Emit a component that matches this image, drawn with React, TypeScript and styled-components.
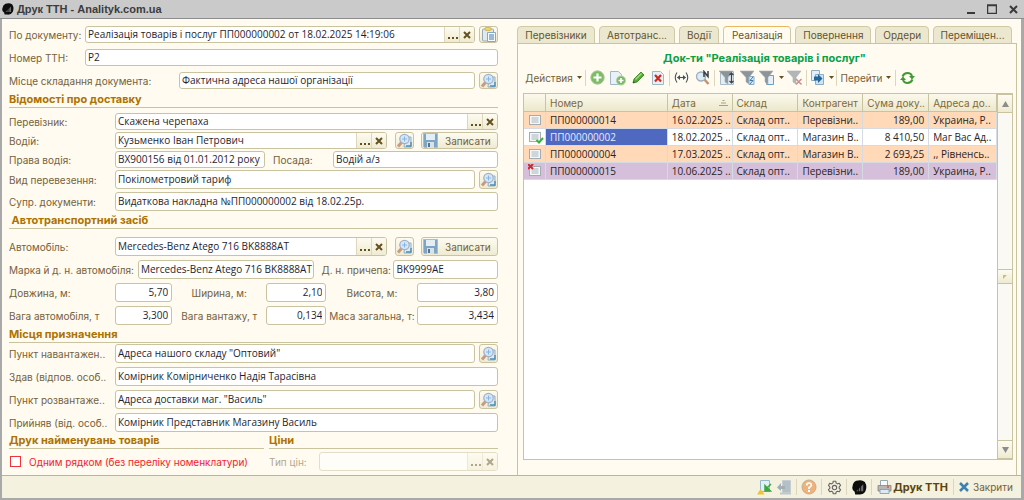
import React from 'react';
import styled, { createGlobalStyle, css } from 'styled-components';

const GlobalStyle = createGlobalStyle`
  * { box-sizing: border-box; }
  body { margin: 0; background: #cacaca; }
  button, input { font: inherit; color: inherit; margin: 0; }
  svg { display: block; flex: none; }
`;

const LABEL_FONT = 'Inter, "Liberation Sans", sans-serif';
const VALUE_FONT = '"Open Sans", "Liberation Sans", sans-serif';

const line = '#c9c3a0';
const labelColor = '#75613c';

const Window = styled.div`
  display: flex;
  flex-direction: column;
  min-height: 100vh;
  border: solid #a9a9a9;
  border-width: 0 3px 2px 2px;
  background: #fffbf0;
  color: ${labelColor};
  font: 10px/14px ${LABEL_FONT};
`;

const TitleBar = styled.header`
  display: flex;
  align-items: center;
  gap: 3px;
  height: 19px;
  padding: 0 2px;
  margin: 0 -3px 0 -2px;
  background: #cacaca;
  border-bottom: 1px solid #8d8d8d;
  color: #3c3c3c;
`;

const Title = styled.h1`
  flex: 1;
  margin: 0;
  font: bold 11px/18px "Liberation Sans", sans-serif;
`;

const WindowButton = styled.button`
  display: grid;
  place-items: center;
  width: 18px;
  height: 18px;
  padding: 0;
  border: 0;
  background: none;
`;

const Body = styled.main`
  flex: 1;
  display: flex;
  gap: 19px;
  padding: 7px 4px 0 7px;
`;

const Form = styled.form`
  flex: 489 1 0;
  min-width: 0;
`;

const Group = styled.div<{ $gap: number; $below?: number }>`
  display: flex;
  flex-direction: column;
  gap: ${p => p.$gap}px;
  margin-bottom: ${p => p.$below ?? 0}px;
`;

const Row = styled.div<{ $compact?: boolean }>`
  display: flex;
  align-items: center;
  height: ${p => (p.$compact ? 17 : 19)}px;
`;

const Heading = styled.h2<{ $above: number; $below: number }>`
  height: 16px;
  margin: ${p => p.$above}px 0 ${p => p.$below}px;
  border-bottom: 1px solid ${line};
  color: #ad7200;
  font: bold 11px/15px ${LABEL_FONT};
`;

const Label = styled.label<{ $w: number; $center?: boolean; $indent?: number }>`
  flex: none;
  width: ${p => p.$w}px;
  padding-left: ${p => p.$indent ?? 0}px;
  text-align: ${p => (p.$center ? 'center' : 'left')};
  white-space: nowrap;
  overflow: hidden;
`;

const MutedLabel = styled(Label)`
  color: #b5a78b;
`;

const FieldBox = styled.div<{ $grow?: number; $disabled?: boolean }>`
  flex: ${p => p.$grow ?? 1} 1 0;
  min-width: 0;
  align-self: stretch;
  display: flex;
  border: 1px solid ${line};
  border-radius: 3px;
  background: #fff;
  overflow: hidden;
  opacity: ${p => (p.$disabled ? 0.5 : 1)};
`;

const Input = styled.input<{ $right?: boolean }>`
  flex: 1;
  min-width: 0;
  padding: ${p => (p.$right ? '0 3px 1px 0' : '0 0 1px 2px')};
  border: 0;
  outline: 0;
  background: none;
  color: #1e1e30;
  font-family: ${VALUE_FONT};
  text-align: ${p => (p.$right ? 'right' : 'left')};
`;

const face = css`
  background: linear-gradient(#fdfbf0, #efebd2);
`;

const PickButton = styled.button`
  ${face}
  display: grid;
  place-items: center;
  width: 15px;
  padding: 0;
  border: 0;
  border-left: 1px solid #ddd8bb;
`;

const IconButton = styled.button<{ $gap?: number }>`
  ${face}
  display: grid;
  place-items: center;
  align-self: stretch;
  flex: none;
  width: 19px;
  margin-left: ${p => p.$gap ?? 4}px;
  padding: 0;
  border: 1px solid ${line};
  border-radius: 3px;
`;

const SaveButton = styled.button`
  ${face}
  display: flex;
  align-items: center;
  align-self: stretch;
  gap: 7px;
  flex: none;
  width: 77px;
  margin-left: 7px;
  padding: 0 0 0 1px;
  border: 1px solid ${line};
  border-radius: 3px;
`;

const Split = styled.div`
  display: flex;
  gap: 5px;
`;

const SplitPart = styled.div<{ $grow: number }>`
  flex: ${p => p.$grow} 1 0;
  min-width: 0;
`;

const CheckBox = styled.input`
  appearance: none;
  flex: none;
  width: 11px;
  height: 11px;
  margin: 0 8px 0 1px;
  border: 1px solid #f0323c;
  background: #fff;
`;

const RedLabel = styled.label`
  color: #f5222d;
  white-space: nowrap;
`;

const Side = styled.section`
  flex: 500 1 0;
  min-width: 0;
  display: flex;
  flex-direction: column;
`;

const Tabs = styled.div`
  display: flex;
  gap: 4px;
  padding-right: 5px;
`;

const Tab = styled.button<{ $w: number; $active?: boolean }>`
  flex: ${p => p.$w} 1 0;
  min-width: 0;
  height: 18px;
  margin-bottom: -1px;
  padding: 0;
  border: 1px solid #cfc9a8;
  border-radius: 4px 4px 0 0;
  background: #ece8cf;
  color: #65532f;
  line-height: 16px;
  white-space: nowrap;
  ${p =>
    p.$active &&
    css`
      border-top-color: #e8b860;
      border-bottom-color: #fffbf0;
      background: #fffbf0;
    `}
`;

const Panel = styled.div`
  flex: 1;
  display: flex;
  flex-direction: column;
  padding: 7px 3px 15px 5px;
  border: solid ${line};
  border-width: 1px 1px 0;
`;

const Caption = styled.h2`
  margin: 0 0 2px;
  padding-right: 7px;
  color: #0a9f48;
  font: bold 11px/15px ${LABEL_FONT};
  text-align: center;
`;

const Toolbar = styled.div`
  display: flex;
  align-items: center;
  height: 19px;
  margin-bottom: 6px;
`;

const ToolButton = styled.button<{ $w?: number }>`
  display: flex;
  align-items: center;
  justify-content: center;
  gap: 4px;
  flex: none;
  width: ${p => (p.$w ? p.$w + 'px' : 'auto')};
  padding: 0 3px;
  border: 0;
  background: none;
  white-space: nowrap;
`;

const PrintButton = styled(ToolButton)`
  gap: 1px;
`;

const Separator = styled.span<{ $wide?: boolean }>`
  flex: none;
  width: 1px;
  height: 16px;
  margin: 0 ${p => (p.$wide ? 2 : 1)}px;
  background: #dcd7bc;
`;

const GridFrame = styled.div`
  flex: 1;
  display: flex;
  align-items: stretch;
  border: 1px solid ${line};
  background: #fff;
`;

const TableArea = styled.div`
  flex: 1;
  min-width: 0;
`;

const Table = styled.table`
  width: 100%;
  table-layout: fixed;
  border-collapse: separate;
  border-spacing: 0;
  color: #2b2320;
`;

const Col = styled.col<{ $share: number }>`
  width: ${p => p.$share}%;
`;

const Th = styled.th`
  height: 18px;
  padding: 0 4px;
  border-right: 1px solid ${line};
  border-bottom: 1px solid ${line};
  background: linear-gradient(#fbf9ec, #ece8cd);
  color: #80693a;
  font-weight: normal;
  text-align: left;
  white-space: nowrap;
  overflow: hidden;
`;

const SortHead = styled.span`
  display: flex;
  align-items: center;
  justify-content: space-between;
`;

const tones = { peach: '#ffd9b8', white: '#ffffff', violet: '#d6bfda' };

const Tr = styled.tr<{ $tone: keyof typeof tones }>`
  background: ${p => tones[p.$tone]};
`;

const Td = styled.td<{ $right?: boolean; $selected?: boolean }>`
  height: 17px;
  padding: 0 4px;
  border-right: 1px solid #d5dbe0;
  border-bottom: 1px solid #d5dbe0;
  background: ${p => (p.$selected ? '#4f68c0' : 'transparent')};
  color: ${p => (p.$selected ? '#e6ebff' : 'inherit')};
  font-family: ${VALUE_FONT};
  text-align: ${p => (p.$right ? 'right' : 'left')};
  white-space: nowrap;
  overflow: hidden;
`;

const ScrollBar = styled.div`
  flex: none;
  display: flex;
  flex-direction: column;
  justify-content: space-between;
  width: 15px;
  border-left: 1px solid ${line};
  background: #fbf9f3;
`;

const ScrollButton = styled.button<{ $h: number }>`
  ${face}
  display: grid;
  place-items: center;
  width: 100%;
  height: ${p => p.$h}px;
  padding: 0;
  border: solid ${line};
  border-width: 1px 0;
`;

const Footer = styled.footer`
  display: flex;
  align-items: center;
  justify-content: flex-end;
  height: 23px;
  padding-right: 5px;
  border-top: 1px solid #bdb58f;
  background: #f4f1de;
`;

const Strong = styled.b`
  color: #5d4408;
  font-size: 11px;
`;

const Cross = () => (
  <svg width="8" height="8" viewBox="0 0 8 8" stroke="#63511f" strokeWidth="2">
    <path d="M1 1L7 7M7 1L1 7" />
  </svg>
);

const Dots = () => (
  <svg width="11" height="11" viewBox="0 0 11 11" fill="#63511f">
    <path d="M1 8h2v2H1zM5 8h2v2H5zM9 8h2v2H9z" />
  </svg>
);

const Caret = () => (
  <svg width="5" height="3" viewBox="0 0 5 3" fill="#63511f">
    <path d="M0 0h5L2.5 3z" />
  </svg>
);

const Lens = () => (
  <svg width="17" height="15" viewBox="0 0 17 15">
    <path d="M9 4h6v10H8z" fill="#dceaf3" stroke="#8fb0c4" />
    <path d="M10 13h5V9" stroke="#4f8db3" strokeWidth="1.400" fill="none" />
    <path d="M2 13.5L5.500 9.500" stroke="#c99a80" strokeWidth="3" />
    <circle cx="8.500" cy="6" r="4.700" fill="#d4e8fb" stroke="#a5b1c2" strokeWidth="1.300" />
    <path d="M6 6h5M8.500 3.500v5" stroke="#86b4e4" />
  </svg>
);

const Clipboard = () => (
  <svg width="16" height="15" viewBox="0 0 16 15">
    <rect x="1.500" y="2" width="11" height="12" rx="1" fill="#dfeaf0" stroke="#9aa9b0" />
    <rect x="4" y=".5" width="6" height="3" rx="1" fill="#f2d668" stroke="#c9a83c" strokeWidth=".7" />
    <path d="M6.500 5.500h8v9h-8z" fill="#f7fbff" stroke="#88a8c2" />
    <path d="M8 8h5M8 10h5M8 12h5" stroke="#3f78ae" />
  </svg>
);

const Floppy = () => (
  <svg width="15" height="15" viewBox="0 0 15 15">
    <path d="M.5.5h14v14h-13l-1-1z" fill="#7ea6c4" stroke="#a3bfd2" />
    <path d="M3 1h9v6H3z" fill="#e4eef5" />
    <path d="M4 9h7v6H4z" fill="#d9e2e8" />
    <path d="M5 10h2v4H5z" fill="#4f7694" />
  </svg>
);

const Logo = ({ size = 12 }: { size?: number }) => (
  <svg width={size} height={size} viewBox="0 0 14 14">
    <path d="M4 .8Q9-.8 12 1.800Q14.500 6 12.500 10.500Q10.500 14 6 13.500H3L2.500 11Q-.5 9 .5 6Q1 2 4 .8z" fill="#0d0d0d" />
    <path d="M4 10.500L10.500 4v6.500z" fill="#6c6c6c" />
    <path d="M6 7v4M8 5v6" stroke="#0d0d0d" strokeWidth=".8" />
  </svg>
);

const Plus = () => (
  <svg width="15" height="15" viewBox="0 0 15 15">
    <circle cx="7.500" cy="7.500" r="6.700" fill="#7dbb66" stroke="#a8c99a" />
    <path d="M7.500 3.500v8M3.500 7.500h8" stroke="#fff" strokeWidth="2.200" />
  </svg>
);

const PageIcon = ({ children, x = 1 }: { children?: React.ReactNode; x?: number }) => (
  <svg width="16" height="16" viewBox="0 0 16 16">
    <path d={`M${x + 0.5} 1.500h8l3 3v10h-11z`} fill="#e8f1f7" stroke="#9fb8c6" />
    {children}
  </svg>
);

const AddCopy = () => (
  <PageIcon x={0}>
    <circle cx="11" cy="10.500" r="4.500" fill="#78b862" stroke="#b4d3a7" />
    <path d="M11 8v5M8.500 10.500h5" stroke="#fff" strokeWidth="1.600" />
  </PageIcon>
);

const Delete = () => (
  <PageIcon x={2}>
    <path d="M5 5L11 11.500M11 5L5 11.500" stroke="#cf2a1f" strokeWidth="2.200" />
  </PageIcon>
);

const Pencil = () => (
  <svg width="13" height="13" viewBox="0 0 13 13">
    <path d="M1 12l1-4 7-7 3 3-7 7z" fill="#4fae2d" stroke="#2f7d1a" strokeWidth=".8" />
    <path d="M3.500 8.500l6-6" stroke="#a5df85" strokeWidth="1.200" />
    <path d="M1 12l.5-2L3 11.500z" fill="#2d4a1e" />
  </svg>
);

const Interval = () => (
  <svg width="15" height="11" viewBox="0 0 15 11" fill="none" stroke="#46535e" strokeWidth="1.100">
    <path d="M3 .5Q-.5 5.500 3 10.500M12 .5Q15.500 5.500 12 10.500" />
    <path d="M3.500 5.500h8" />
    <path d="M3 5.500l3-2.500v5zM12 5.500L9 3v5z" fill="#46535e" stroke="none" />
  </svg>
);

const FindNumber = () => (
  <svg width="16" height="16" viewBox="0 0 16 16">
    <path d="M9 9l4.500 5" stroke="#c8906f" strokeWidth="2.500" />
    <circle cx="6" cy="6.500" r="4.500" fill="#dcebf5" stroke="#9db0bf" strokeWidth="1.300" />
    <path d="M9 7V1.500l4 5V1" fill="none" stroke="#3a3f45" strokeWidth="1.500" />
  </svg>
);

const Funnel = ({ kind }: { kind: 'sort' | 'page' | 'list' | 'clear' }) => (
  <svg width="16" height="16" viewBox="0 0 16 16">
    {kind === 'list' && <path d="M7.500 5.500h7v9h-7z" fill="#e6f0f8" stroke="#6f9cc0" />}
    {kind === 'sort' && <path d="M1.500 1.500h13v13h-13z" fill="#e2edf4" stroke="#a9bcc8" />}
    <path d="M0 1h14L9 7.500V14l-3-2V7.500z" fill={kind === 'clear' ? '#b3b6b8' : '#8b949b'} stroke="#aab1b6" strokeWidth=".6" />
    {kind === 'sort' && <path d="M12.500 3v10M10.500 5l2-2 2 2M10.500 11l2 2 2-2" fill="none" stroke="#39424a" strokeWidth="1.200" />}
    {kind === 'page' && (
      <>
        <path d="M9 6.500h5v8H9z" fill="#d9eaf6" stroke="#87aecb" />
        <path d="M13 7l-3 3.500h3L10 14" fill="none" stroke="#3c78a8" />
      </>
    )}
    {kind === 'clear' && <path d="M9 9l5.500 5.500M14.500 9L9 14.500" stroke="#c98f8a" strokeWidth="1.500" />}
  </svg>
);

const CopyTo = () => (
  <svg width="15" height="15" viewBox="0 0 15 15">
    <path d="M1.500.5h8v10h-8z" fill="#e3eef6" stroke="#8dabc1" />
    <path d="M5.500 4.500h8v10h-8z" fill="#d2e3ef" stroke="#8dabc1" />
    <path d="M4 6.500h4V4l4.500 4.500L8 13v-2.500H4z" fill="#23679f" />
  </svg>
);

const Refresh = () => (
  <svg width="15" height="14" viewBox="0 0 15 14" fill="none" stroke="#3f9a35" strokeWidth="2">
    <path d="M2.500 5.500Q4 2 7.500 2T12 5M12.500 8.500Q11 12 7.500 12T3 9" />
    <path d="M9 5h6l-3 3.500zM6 9H0l3-3.500z" fill="#3f9a35" stroke="none" />
  </svg>
);

const SortMark = () => (
  <svg width="9" height="6" viewBox="0 0 9 6" stroke="#aba277">
    <path d="M3.500.5h2M2 3h5M0 5.500h9" />
  </svg>
);

const Triangle = ({ down }: { down?: boolean }) => (
  <svg width="7" height="6" viewBox="0 0 7 6" fill="#8c8c8c">
    <path d={down ? 'M0 0h7L3.500 6z' : 'M0 6h7L3.500 0z'} />
  </svg>
);

const DocIcon = ({ mark }: { mark?: 'posted' | 'deleted' }) => (
  <svg width="16" height="14" viewBox="0 0 16 14">
    <rect x="1.500" y="2.500" width="11" height="9" fill="#f4f7f8" stroke="#a3adb1" />
    <path d="M3.500 5h7M3.500 7h7M3.500 9h7" stroke="#a9b4ba" />
    {mark === 'posted' && <path d="M8.500 10l2.500 2.500 4-4.500" fill="none" stroke="#35b13c" strokeWidth="2" />}
    {mark === 'deleted' && <path d="M0 0l5 5M5 0L0 5" stroke="#d9252b" strokeWidth="2" />}
  </svg>
);

const GoTo = () => (
  <svg width="15" height="15" viewBox="0 0 15 15">
    <path d="M3.500.5h9v11h-9z" fill="#e3eff6" stroke="#98b9ca" />
    <path d="M0 14.500L3.500 9l4 5.500z" fill="#eec33a" />
    <path d="M14 4L9 9M8 5.500V11h5.500z" fill="#3fa544" stroke="#3fa544" strokeWidth="1.500" />
  </svg>
);

const Exit = () => (
  <svg width="15" height="15" viewBox="0 0 15 15">
    <path d="M5.500.5h8v12h-8z" fill="#b5bfc6" stroke="#c6cdd2" />
    <path d="M8 6H4V3L0 7.500 4 11V9h4z" fill="#a3afb7" />
    <path d="M3 13.500h11" stroke="#c0c8cc" strokeWidth="2" />
  </svg>
);

const Help = () => (
  <svg width="16" height="16" viewBox="0 0 16 16">
    <circle cx="8" cy="8" r="7" fill="#efb27c" stroke="#c9ab8c" />
    <path d="M5.700 6.500Q5.700 4 8 4T10.300 6.200Q10.300 7.500 8 8.500V10" fill="none" stroke="#fff" strokeWidth="1.700" />
    <path d="M7 11h2v2H7z" fill="#fff" />
  </svg>
);

const Gear = () => (
  <svg width="15" height="15" viewBox="0 0 24 24" fill="none" stroke="#666" strokeWidth="1.800" strokeLinejoin="round">
    <path d="M10 2h4l.7 3 2 1.200 3-.9 2 3.400L19.500 11v2.300l2.200 2.100-2 3.400-3-.9-2 1.200L14 22h-4l-.7-2.900-2-1.200-3 .9-2-3.400L4.500 13.300V11L2.300 8.700l2-3.400 3 .9 2-1.200z" />
    <circle cx="12" cy="12" r="3.500" />
  </svg>
);

const Printer = () => (
  <svg width="15" height="14" viewBox="0 0 15 14">
    <path d="M3.500.5h7v6h-7z" fill="#f6fafd" stroke="#9aa6ae" />
    <path d="M1 5.500h13v5.500H1z" fill="#b9b5b5" stroke="#878383" strokeWidth=".8" />
    <path d="M3 9.500h9v4H3z" fill="#dbe9f5" stroke="#7f98ac" strokeWidth=".8" />
    <path d="M10 7h2" stroke="#e4553a" strokeWidth="1.500" />
  </svg>
);

const BlueCross = () => (
  <svg width="10" height="10" viewBox="0 0 10 10" stroke="#3d80b3" strokeWidth="2.500">
    <path d="M1 1L9 9M9 1L1 9" />
  </svg>
);

interface FieldProps {
  id: string;
  value: string;
  grow?: number;
  pick?: boolean;
  right?: boolean;
  disabled?: boolean;
}

const Field = ({ id, value, grow, pick, right, disabled }: FieldProps) => (
  <FieldBox $grow={grow} $disabled={disabled}>
    <Input id={id} defaultValue={value} $right={right} disabled={disabled} />
    {pick && (
      <>
        <PickButton type="button" aria-label="Вибрати" disabled={disabled}><Dots /></PickButton>
        <PickButton type="button" aria-label="Очистити" disabled={disabled}><Cross /></PickButton>
      </>
    )}
  </FieldBox>
);

const Search = ({ gap }: { gap?: number }) => (
  <IconButton type="button" aria-label="Відкрити" $gap={gap}><Lens /></IconButton>
);

const Save = () => (
  <SaveButton type="button"><Floppy />Записати</SaveButton>
);

const tabs: [string, number][] = [
  ['Перевізники', 78], ['Автотранс...', 76], ['Водії', 39], ['Реалізація', 68],
  ['Повернення', 76], ['Ордери', 53], ['Переміщен...', 79],
];

const columns: [string, number][] = [
  ['', 22], ['Номер', 122], ['Дата', 65], ['Склад', 66], ['Контрагент', 65], ['Сума доку..', 66], ['Адреса до..', 68],
];
const columnTotal = columns.reduce((sum, [, w]) => sum + w, 0);

const docs: { tone: keyof typeof tones; mark?: 'posted' | 'deleted'; cells: string[] }[] = [
  { tone: 'peach', cells: ['ПП000000014', '16.02.2025 ..', 'Склад опт..', 'Перевізни..', '189,00', 'Украина, Р..'] },
  { tone: 'white', mark: 'posted', cells: ['ПП000000002', '18.02.2025 ..', 'Склад опт..', 'Магазин В..', '8 410,50', 'Маг Вас Ад..'] },
  { tone: 'peach', cells: ['ПП000000004', '17.03.2025 ..', 'Склад опт..', 'Магазин В..', '2 693,25', ',, Рівненсь..'] },
  { tone: 'violet', mark: 'deleted', cells: ['ПП000000015', '10.06.2025 ..', 'Склад опт..', 'Перевізни..', '189,00', 'Украина, Р..'] },
];

export default function App() {
  return (
    <Window>
      <GlobalStyle />
      <TitleBar>
        <Logo />
        <Title>Друк ТТН - Analityk.com.ua</Title>
        <WindowButton aria-label="Згорнути">
          <svg width="8" height="10" stroke="#3a3a3a" strokeWidth="2"><path d="M0 9h8" /></svg>
        </WindowButton>
        <WindowButton aria-label="Розгорнути">
          <svg width="10" height="10" fill="none" stroke="#3a3a3a"><path d="M.5 1.500h9v8h-9zM0 1h10" strokeWidth="1.500" /></svg>
        </WindowButton>
        <WindowButton aria-label="Закрити вікно">
          <svg width="9" height="9" stroke="#3a3a3a" strokeWidth="2"><path d="M1 1l7 7M8 1L1 8" /></svg>
        </WindowButton>
      </TitleBar>

      <Body>
        <Form>
          <Group $gap={6}>
            <Row $compact>
              <Label $w={76} htmlFor="doc">По документу:</Label>
              <Field id="doc" value="Реалізація товарів і послуг ПП000000002 от 18.02.2025 14:19:06" pick />
              <IconButton type="button" aria-label="Вставити"><Clipboard /></IconButton>
            </Row>
            <Row $compact>
              <Label $w={76} htmlFor="num">Номер ТТН:</Label>
              <Field id="num" value="Р2" />
            </Row>
            <Row $compact>
              <Label $w={170} htmlFor="place">Місце складання документа:</Label>
              <Field id="place" value="Фактична адреса нашої організації" />
              <Search />
            </Row>
          </Group>

          <Heading $above={3} $below={5}>Відомості про доставку</Heading>
          <Group $gap={2} $below={2}>
            <Row $compact>
              <Label $w={106} htmlFor="carrier">Перевізник:</Label>
              <Field id="carrier" value="Скажена черепаха" pick />
            </Row>
            <Row $compact>
              <Label $w={106} htmlFor="driver">Водій:</Label>
              <Field id="driver" value="Кузьменко Іван Петрович" pick />
              <Search gap={8} />
              <Save />
            </Row>
            <Row $compact>
              <Label $w={106} htmlFor="licence">Права водія:</Label>
              <Field id="licence" value="ВХ900156 від 01.01.2012 року" grow={150} />
              <Label $w={68} $indent={8} htmlFor="post">Посада:</Label>
              <Field id="post" value="Водій а/з" grow={165} />
            </Row>
          </Group>
          <Group $gap={3}>
            <Row>
              <Label $w={106} htmlFor="kind">Вид перевезення:</Label>
              <Field id="kind" value="Покілометровий тариф" />
              <Search />
            </Row>
            <Row>
              <Label $w={106} htmlFor="papers">Супр. документи:</Label>
              <Field id="papers" value="Видаткова накладна №ПП000000002 від 18.02.25р." />
            </Row>
          </Group>

          <Heading $above={2} $below={8}>&nbsp;Автотранспортний засіб</Heading>
          <Group $gap={4}>
            <Row>
              <Label $w={106} htmlFor="car">Автомобіль:</Label>
              <Field id="car" value="Mercedes-Benz Atego 716 BK8888AT" pick />
              <Search gap={8} />
              <Save />
            </Row>
            <Row>
              <Label $w={129} htmlFor="brand">Марка й д. н. автомобіля:</Label>
              <Field id="brand" value="Mercedes-Benz Atego 716 BK8888AT" grow={177} />
              <Label $w={79} $indent={7} htmlFor="trailer">Д. н. причепа:</Label>
              <Field id="trailer" value="BK9999AE" grow={104} />
            </Row>
            <Row>
              <Label $w={106} htmlFor="length">Довжина, м:</Label>
              <Field id="length" value="5,70" grow={57} right />
              <Label $w={94} $center htmlFor="width">Ширина, м:</Label>
              <Field id="width" value="2,10" grow={60} right />
              <Label $w={91} $center htmlFor="height">Висота, м:</Label>
              <Field id="height" value="3,80" grow={81} right />
            </Row>
            <Row>
              <Label $w={106} htmlFor="carWeight">Вага автомобіля, т</Label>
              <Field id="carWeight" value="3,300" grow={57} right />
              <Label $w={94} $center htmlFor="cargo">Вага вантажу, т</Label>
              <Field id="cargo" value="0,134" grow={60} right />
              <Label $w={91} $center htmlFor="total">Маса загальна, т:</Label>
              <Field id="total" value="3,434" grow={81} right />
            </Row>
          </Group>

          <Heading $above={2} $below={1}>Місця призначення</Heading>
          <Group $gap={4}>
            <Row>
              <Label $w={106} htmlFor="loadAt">Пункт навантажен..</Label>
              <Field id="loadAt" value={'Адреса нашого складу "Оптовий"'} />
              <Search />
            </Row>
            <Row>
              <Label $w={106} htmlFor="sender">Здав (відпов. особ..</Label>
              <Field id="sender" value="Комірник Комірниченко Надія Тарасівна" />
            </Row>
            <Row>
              <Label $w={106} htmlFor="unloadAt">Пункт розвантаже..</Label>
              <Field id="unloadAt" value={'Адреса доставки маг. "Василь"'} />
              <Search />
            </Row>
            <Row>
              <Label $w={106} htmlFor="receiver">Прийняв (від. особ..</Label>
              <Field id="receiver" value="Комірник Представник Магазину Василь" />
            </Row>
          </Group>

          <Split>
            <SplitPart $grow={255}>
              <Heading $above={1} $below={3}>Друк найменувань товарів</Heading>
              <Row>
                <CheckBox type="checkbox" id="oneLine" />
                <RedLabel htmlFor="oneLine">Одним рядком (без переліку номенклатури)</RedLabel>
              </Row>
            </SplitPart>
            <SplitPart $grow={229}>
              <Heading $above={1} $below={3}>Ціни</Heading>
              <Row>
                <MutedLabel $w={50} htmlFor="price">Тип цін:</MutedLabel>
                <Field id="price" value="" pick disabled />
              </Row>
            </SplitPart>
          </Split>
        </Form>

        <Side>
          <Tabs role="tablist">
            {tabs.map(([name, w]) => (
              <Tab key={name} role="tab" $w={w} $active={name === 'Реалізація'} aria-selected={name === 'Реалізація'}>{name}</Tab>
            ))}
          </Tabs>
          <Panel>
            <Caption>Док-ти "Реалізація товарів і послуг"</Caption>
            <Toolbar>
              <ToolButton $w={61}>Действия<Caret /></ToolButton>
              <Separator />
              <ToolButton $w={21} aria-label="Додати"><Plus /></ToolButton>
              <ToolButton $w={20} aria-label="Копіювати"><AddCopy /></ToolButton>
              <ToolButton $w={20} aria-label="Змінити"><Pencil /></ToolButton>
              <ToolButton $w={20} aria-label="Видалити"><Delete /></ToolButton>
              <Separator />
              <ToolButton $w={21} aria-label="Інтервал"><Interval /></ToolButton>
              <ToolButton $w={21} aria-label="Пошук за номером"><FindNumber /></ToolButton>
              <Separator />
              <ToolButton $w={21} aria-label="Відбір і сортування"><Funnel kind="sort" /></ToolButton>
              <ToolButton $w={21} aria-label="Відбір за значенням"><Funnel kind="page" /></ToolButton>
              <ToolButton $w={27} aria-label="Історія відборів"><Funnel kind="list" /><Caret /></ToolButton>
              <ToolButton $w={20} aria-label="Вимкнути відбір"><Funnel kind="clear" /></ToolButton>
              <Separator />
              <ToolButton $w={27} aria-label="Ввести на підставі"><CopyTo /><Caret /></ToolButton>
              <Separator />
              <ToolButton $w={56}>Перейти<Caret /></ToolButton>
              <Separator />
              <ToolButton $w={21} aria-label="Оновити"><Refresh /></ToolButton>
            </Toolbar>
            <GridFrame>
              <TableArea>
                <Table>
                  <colgroup>
                    {columns.map(([name, w]) => <Col key={name} $share={(w / columnTotal) * 100} />)}
                  </colgroup>
                  <thead>
                    <tr>
                      {columns.map(([name]) => (
                        <Th key={name}>{name === 'Дата' ? <SortHead>Дата<SortMark /></SortHead> : name}</Th>
                      ))}
                    </tr>
                  </thead>
                  <tbody>
                    {docs.map(({ tone, mark, cells }) => (
                      <Tr key={cells[0]} $tone={tone}>
                        <Td><DocIcon mark={mark} /></Td>
                        {cells.map((cell, i) => (
                          <Td key={i} $right={i === 4} $selected={i === 0 && mark === 'posted'}>{cell}</Td>
                        ))}
                      </Tr>
                    ))}
                  </tbody>
                </Table>
              </TableArea>
              <ScrollBar>
                <ScrollButton $h={19} aria-label="Вгору"><Triangle /></ScrollButton>
                <ScrollButton $h={15} aria-label="Повзунок"><svg width="4" height="4" fill="#c2bb94"><path d="M0 0h4L0 4z" /></svg></ScrollButton>
                <ScrollButton $h={19} aria-label="Вниз"><Triangle down /></ScrollButton>
              </ScrollBar>
            </GridFrame>
          </Panel>
        </Side>
      </Body>

      <Footer>
        <ToolButton $w={20} aria-label="Перейти до документа"><GoTo /></ToolButton>
        <ToolButton $w={20} aria-label="Вихід"><Exit /></ToolButton>
        <Separator $wide />
        <ToolButton $w={20} aria-label="Довідка"><Help /></ToolButton>
        <Separator $wide />
        <ToolButton $w={20} aria-label="Налаштування"><Gear /></ToolButton>
        <Separator $wide />
        <ToolButton $w={20} aria-label="Аналітик"><Logo size={15} /></ToolButton>
        <Separator $wide />
        <PrintButton><Printer /><Strong>Друк ТТН</Strong></PrintButton>
        <Separator $wide />
        <ToolButton><BlueCross />Закрити</ToolButton>
      </Footer>
    </Window>
  );
}
